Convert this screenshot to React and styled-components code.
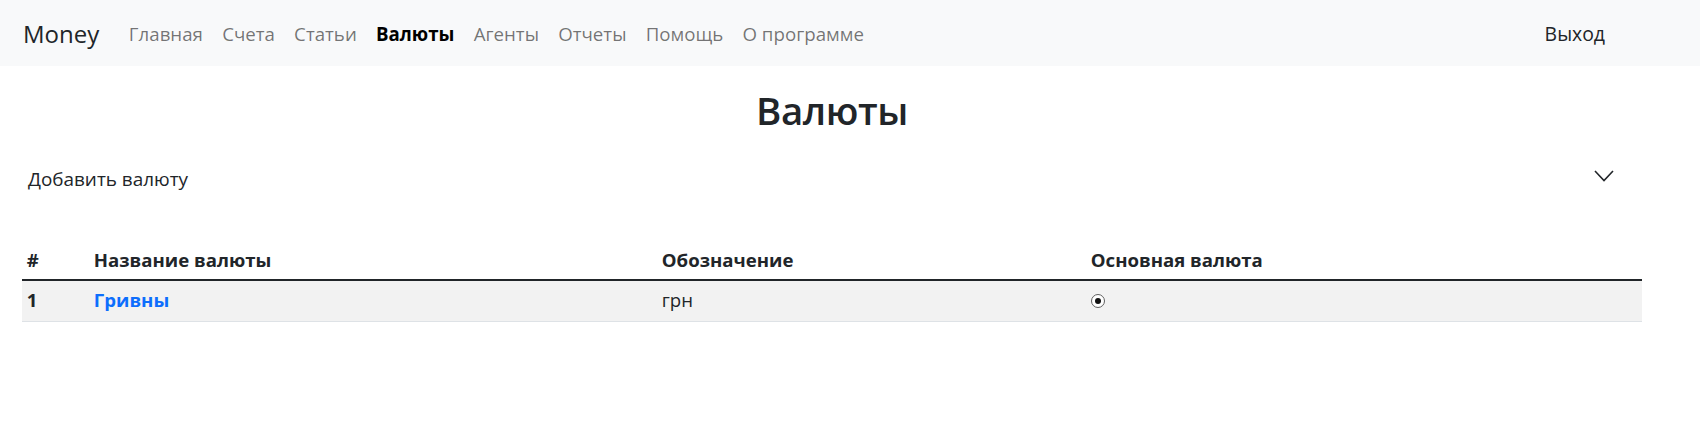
import React from "react";
import styled, { createGlobalStyle } from "styled-components";

const Global = createGlobalStyle`
  html, body { margin: 0; padding: 0; background: #fff; }
  body {
    font-family: "Open Sans", "Noto Sans", sans-serif;
    color: #212529;
    font-size: 19.2px;
    line-height: 28.8px;
  }
  * { box-sizing: border-box; }
`;

const Navbar = styled.nav`
  height: 66px;
  background: #f8f9fa;
  display: flex;
  align-items: center;
  padding: 0 95px 0 23px;
`;

const Brand = styled.a`
  font-size: 24px;
  line-height: 30px;
  color: #212529;
  text-decoration: none;
  margin-right: 20px;
  padding-top: 2px;
`;

const NavList = styled.ul`
  display: flex;
  list-style: none;
  margin: 0;
  padding: 0;
  align-items: center;
`;

const NavLink = styled.a`
  display: block;
  padding: 3px 9.6px 0;
  font-size: 18.7px;
  line-height: 28.8px;
  text-decoration: none;
  color: ${(p) => (p.$active ? "#000" : "rgba(0,0,0,0.55)")};
  font-weight: ${(p) => (p.$active ? 700 : 400)};
`;

const Logout = styled.a`
  margin-left: auto;
  font-size: 19.4px;
  line-height: 30px;
  padding-top: 2px;
  color: #212529;
  text-decoration: none;
`;

const Main = styled.main`
  padding: 0 58px 0 22px;
`;

const Title = styled.h2`
  margin: 21px 0 0;
  text-align: center;
  font-size: 38.4px;
  line-height: 46px;
  font-weight: 600;
  letter-spacing: -0.4px;
`;

const AccordionButton = styled.button`
  margin-top: 32px;
  width: 100%;
  display: flex;
  align-items: center;
  justify-content: space-between;
  background: transparent;
  border: 0;
  padding: 0 28px 0 6px;
  font-family: inherit;
  font-size: 18.9px;
  line-height: 28.8px;
  color: #212529;
  cursor: pointer;
`;

const Chevron = styled.svg`
  width: 20px;
  height: 12px;
  margin-top: -7px;
`;

const Table = styled.table`
  margin-top: 47px;
  width: 100%;
  border-collapse: collapse;
`;

const Th = styled.th`
  text-align: left;
  font-weight: 700;
  padding: 4.8px;
  font-size: 18.6px;
  line-height: 28.8px;
  border-bottom: 2px solid #212529;
  width: ${(p) => p.$w || "auto"};
`;

const Row = styled.tr`
  background: #f2f2f2;
  border-bottom: 1px solid #dee2e6;
`;

const Td = styled.td`
  padding: 5.3px 4.8px;
  font-size: 18.6px;
  line-height: 28.8px;
  font-weight: ${(p) => (p.$bold ? 700 : 400)};
  vertical-align: middle;
`;

const CurrencyLink = styled.a`
  color: #0d6efd;
  font-weight: 700;
  text-decoration: none;
`;

const Radio = styled.span`
  display: inline-flex;
  align-items: center;
  justify-content: center;
  width: 14px;
  height: 14px;
  border-radius: 50%;
  border: 1.5px solid #5f5f5f;
  background: #fff;
  vertical-align: middle;
  margin-top: -3px;
  &::after {
    content: "";
    width: 6px;
    height: 6px;
    border-radius: 50%;
    background: #111;
  }
`;

const navItems = [
  "Главная",
  "Счета",
  "Статьи",
  "Валюты",
  "Агенты",
  "Отчеты",
  "Помощь",
  "О программе",
];

export default function App() {
  return (
    <>
      <Global />
      <Navbar>
        <Brand href="#">Money</Brand>
        <NavList>
          {navItems.map((n) => (
            <li key={n}>
              <NavLink href="#" $active={n === "Валюты"}>
                {n}
              </NavLink>
            </li>
          ))}
        </NavList>
        <Logout href="#">Выход</Logout>
      </Navbar>
      <Main>
        <Title>Валюты</Title>
        <AccordionButton>
          <span>Добавить валюту</span>
          <Chevron viewBox="0 0 20 12" fill="none">
            <path d="M1 1 L10 10.5 L19 1" stroke="#212529" strokeWidth="1.6" />
          </Chevron>
        </AccordionButton>
        <Table>
          <thead>
            <tr>
              <Th $w="67px">#</Th>
              <Th $w="568px">Название валюты</Th>
              <Th $w="429px">Обозначение</Th>
              <Th>Основная валюта</Th>
            </tr>
          </thead>
          <tbody>
            <Row>
              <Td $bold>1</Td>
              <Td>
                <CurrencyLink href="#">Гривны</CurrencyLink>
              </Td>
              <Td>грн</Td>
              <Td>
                <Radio />
              </Td>
            </Row>
          </tbody>
        </Table>
      </Main>
    </>
  );
}
